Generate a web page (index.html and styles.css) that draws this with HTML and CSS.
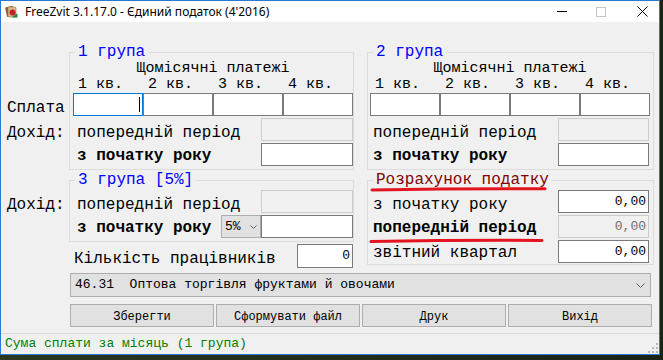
FILE: index.html
```html
<!DOCTYPE html>
<html lang="uk">
<head>
    <meta charset="UTF-8">
    <meta name="viewport" content="width=device-width, initial-scale=1.0">
    <title>FreeZvit - Єдиний податок</title>
    <link rel="stylesheet" href="styles.css">
</head>
<body>
<div class="window">
    <div class="titlebar">
        <svg class="app-icon" width="13" height="13" viewBox="0 0 13 13">
            <rect x="1" y="1.5" width="8" height="10" rx="1" fill="#8d5a35" transform="rotate(-12 5 6.5)"/>
            <rect x="3" y="2" width="8" height="10" rx="1" fill="#d8b98c" stroke="#9c7448" stroke-width="0.6"/>
            <circle cx="7.5" cy="7.5" r="3" fill="#c4202b"/>
            <path d="M7 12.5 Q10 9 12.5 8.5 L12.5 12.5 Z" fill="#1f8a3a"/>
        </svg>
        <span class="title">FreeZvit 3.1.17.0 - Єдиний податок (4'2016)</span>
        <div class="controls">
            <span class="min"></span>
            <span class="max"></span>
            <svg class="close" width="11" height="11" viewBox="0 0 11 11">
                <path d="M0.5 0.5 L10.5 10.5 M10.5 0.5 L0.5 10.5" stroke="#000" stroke-width="1"/>
            </svg>
        </div>
    </div>

    <div class="client">
        <div class="section top">
            <div class="side top-side">
                <span class="lbl">Сплата</span>
                <span class="lbl">Дохід:</span>
            </div>

            <fieldset class="grp g1">
                <legend>1 група</legend>
                <div class="body">
                    <div class="hdr">Щомісячні платежі</div>
                    <div class="quarters"><span>1 кв.</span><span>2 кв.</span><span>3 кв.</span><span>4 кв.</span></div>
                    <div class="pays">
                        <div class="fld focus"><span class="caret"></span></div>
                        <div class="fld"></div>
                        <div class="fld"></div>
                        <div class="fld"></div>
                    </div>
                    <div class="row">
                        <span class="lbl">попередній період</span>
                        <div class="fld off"></div>
                    </div>
                    <div class="row">
                        <span class="lbl up b">з початку року</span>
                        <div class="fld"></div>
                    </div>
                </div>
            </fieldset>

            <fieldset class="grp g2">
                <legend>2 група</legend>
                <div class="body">
                    <div class="hdr">Щомісячні платежі</div>
                    <div class="quarters"><span>1 кв.</span><span>2 кв.</span><span>3 кв.</span><span>4 кв.</span></div>
                    <div class="pays">
                        <div class="fld"></div>
                        <div class="fld"></div>
                        <div class="fld"></div>
                        <div class="fld"></div>
                    </div>
                    <div class="row">
                        <span class="lbl">попередній період</span>
                        <div class="fld off"></div>
                    </div>
                    <div class="row">
                        <span class="lbl up b">з початку року</span>
                        <div class="fld"></div>
                    </div>
                </div>
            </fieldset>
        </div>

        <div class="section lower">
            <div class="side low-side">
                <span class="lbl">Дохід:</span>
            </div>

            <div class="col">
                <fieldset class="grp g3">
                    <legend>3 група [5%]</legend>
                    <div class="body">
                        <div class="row">
                            <span class="lbl">попередній період</span>
                            <div class="fld off"></div>
                        </div>
                        <div class="row">
                            <span class="lbl up b">з початку року</span>
                            <div class="pick">
                                <div class="combo">
                                    <span>5%</span>
                                    <svg width="7" height="4" viewBox="0 0 7 4"><path d="M0.5 0.5 L3.5 3.5 L6.5 0.5" fill="none" stroke="#606060" stroke-width="1"/></svg>
                                </div>
                                <div class="fld"></div>
                            </div>
                        </div>
                    </div>
                </fieldset>
                <div class="count">
                    <span class="lbl">Кількість працівників</span>
                    <div class="fld">0</div>
                </div>
            </div>

            <fieldset class="grp g4">
                <legend class="calc">Розрахунок податку</legend>
                <div class="body">
                    <div class="row">
                        <span class="lbl">з початку року</span>
                        <div class="fld">0,00</div>
                    </div>
                    <div class="row">
                        <span class="lbl up b">попередній період</span>
                        <div class="fld off">0,00</div>
                    </div>
                    <div class="row">
                        <span class="lbl up">звітний квартал</span>
                        <div class="fld">0,00</div>
                    </div>
                    <svg class="marks" width="184" height="62" viewBox="0 0 184 62">
                        <path d="M6 6 Q 90 4.6 179 4.8" fill="none" stroke="#e3141f" stroke-width="3" stroke-linecap="round"/>
                        <path d="M5 57.6 Q 90 56 176 56.4" fill="none" stroke="#e3141f" stroke-width="3" stroke-linecap="round"/>
                    </svg>
                </div>
            </fieldset>
        </div>

        <div class="okved">
            <span class="okved-text">46.31  Оптова торгівля фруктами й овочами</span>
            <svg width="9" height="5" viewBox="0 0 9 5"><path d="M0.5 0.5 L4.5 4.5 L8.5 0.5" fill="none" stroke="#606060" stroke-width="1"/></svg>
        </div>

        <div class="buttons">
            <div class="btn">Зберегти</div>
            <div class="btn">Сформувати файл</div>
            <div class="btn">Друк</div>
            <div class="btn">Вихід</div>
        </div>

        <div class="status">
            <span>Сума сплати за місяць (1 група)</span>
            <svg class="grip" width="10" height="10" viewBox="0 0 10 10">
                <rect x="8" y="0" width="2" height="2" fill="#b8b8b8"/>
                <rect x="4" y="4" width="2" height="2" fill="#b8b8b8"/>
                <rect x="8" y="4" width="2" height="2" fill="#b8b8b8"/>
                <rect x="0" y="8" width="2" height="2" fill="#b8b8b8"/>
                <rect x="4" y="8" width="2" height="2" fill="#b8b8b8"/>
                <rect x="8" y="8" width="2" height="2" fill="#b8b8b8"/>
            </svg>
        </div>
    </div>
</div>
</body>
</html>
```

FILE: styles.css
```css
* {
    box-sizing: border-box;
}
body {
    margin: 0;
    background: linear-gradient(90deg, #2a3722, #1a2316);
    font-family: "Liberation Mono", "Courier New", monospace;
    font-size: 16px;
    color: #000;
}
.window {
    width: 660px;
    height: 355px;
    border: 1px solid #2b78d4;
    background: #f0f0f0;
    display: flex;
    flex-direction: column;
}

/* title bar */
.titlebar {
    flex: none;
    height: 21px;
    background: #fff;
    display: flex;
    align-items: center;
    font-family: "Noto Sans", sans-serif;
    font-size: 12px;
}
.app-icon {
    margin-left: 4px;
}
.title {
    margin-left: 7px;
}
.controls {
    margin-left: auto;
    display: flex;
    align-items: center;
    padding-right: 11px;
}
.min {
    width: 10px;
    height: 1px;
    background: #000;
    margin-right: 29px;
}
.max {
    width: 10px;
    height: 10px;
    border: 1px solid #c4c4c4;
    margin-right: 31px;
}

/* client area */
.client {
    flex: 1;
    display: flex;
    flex-direction: column;
}
.section {
    display: grid;
    grid-template-columns: 68px 298px 287px;
    justify-items: start;
    align-items: start;
}
.top {
    margin-top: 22px;
}
.lower {
    margin-top: 2px;
}
.side {
    display: flex;
    flex-direction: column;
    gap: 2px;
    padding-left: 6px;
}
.top-side {
    padding-top: 49px;
}
.low-side {
    padding-top: 18px;
}
.lbl {
    display: block;
    height: 23px;
    line-height: 23px;
    padding-top: 4px;
    white-space: nowrap;
}
.lbl.up {
    padding-top: 2px;
}
.b {
    font-weight: bold;
}

/* group boxes */
.grp {
    margin: 0;
    padding: 0;
    border: 1px solid #dcdcdc;
    min-width: 0;
}
.grp legend {
    margin-left: 5px;
    padding: 0 3px;
    line-height: 16px;
    color: #0000ff;
}
.grp legend.calc {
    color: #800000;
}
.g1, .g3, .col {
    width: 285px;
}
.g2, .g4 {
    width: 287px;
}
.g1 .body {
    padding: 1px 0 3px 3px;
}
.g2 .body {
    padding: 1px 3px 3px 2px;
}
.g3 .body {
    padding: 2px 0 3px 3px;
}
.g4 .body {
    padding: 2px 3px 1px 2px;
    position: relative;
}
.g1 .lbl, .g3 .lbl {
    padding-left: 4px;
}
.g2 .lbl, .g4 .lbl {
    padding-left: 3px;
}
.hdr {
    font-size: 15px;
    line-height: 16px;
    text-align: center;
}
.quarters, .pays {
    display: grid;
    grid-template-columns: repeat(4, 70px);
}
.quarters {
    font-size: 15px;
    line-height: 16px;
}
.quarters span {
    padding-left: 5px;
}
.row {
    display: flex;
    justify-content: space-between;
    height: 23px;
    margin-top: 2px;
}
.row:first-child {
    margin-top: 0;
}

/* fields */
.fld {
    height: 23px;
    border: 1px solid #7a7a7a;
    background: #fff;
    font-size: 13px;
    line-height: 21px;
    text-align: right;
    padding-right: 2px;
}
.fld.off {
    background: #f0f0f0;
    border-color: #cccccc;
    color: #6d6d6d;
}
.fld.focus {
    border-color: #0078d7;
    display: flex;
    justify-content: flex-end;
    align-items: center;
}
.caret {
    width: 1px;
    height: 15px;
    background: #000;
}
.g1 .row .fld, .g3 .row .fld {
    width: 92px;
}
.g2 .row .fld, .g4 .row .fld {
    width: 91px;
    margin-right: 1px;
}
.pick {
    display: flex;
}
.combo {
    width: 40px;
    height: 23px;
    background: #e1e1e1;
    border: 1px solid #adadad;
    display: flex;
    align-items: center;
    justify-content: space-between;
    padding: 0 3px 0 3px;
    font-size: 13px;
}
.count {
    display: flex;
    justify-content: space-between;
    height: 24px;
    margin-top: 2px;
}
.count .lbl {
    height: 24px;
    padding-left: 5px;
}
.count .fld {
    width: 56px;
    height: 24px;
    line-height: 22px;
    margin-right: 1px;
}
.marks {
    position: absolute;
    left: -2px;
    top: -4px;
}

/* bottom part */
.okved {
    margin: 5px 0 0 69px;
    width: 581px;
    height: 24px;
    background: #e1e1e1;
    border: 1px solid #adadad;
    display: flex;
    align-items: center;
    justify-content: space-between;
    padding: 0 5px 0 4px;
    font-size: 13px;
    line-height: 22px;
}
.okved-text {
    white-space: pre;
}
.buttons {
    display: flex;
    gap: 2px;
    margin: 7px 0 0 69px;
}
.btn {
    width: 144px;
    height: 23px;
    background: #e1e1e1;
    border: 1px solid #adadad;
    font-size: 12px;
    line-height: 21px;
    padding-top: 2px;
    text-align: center;
}
.status {
    flex: 1;
    margin-top: 6px;
    border-top: 1px solid #dadada;
    display: flex;
    justify-content: space-between;
    padding-left: 4px;
    font-size: 13px;
    line-height: 20px;
    color: #008000;
}
.grip {
    align-self: flex-end;
    margin: 0 1px 1px 0;
}
```
